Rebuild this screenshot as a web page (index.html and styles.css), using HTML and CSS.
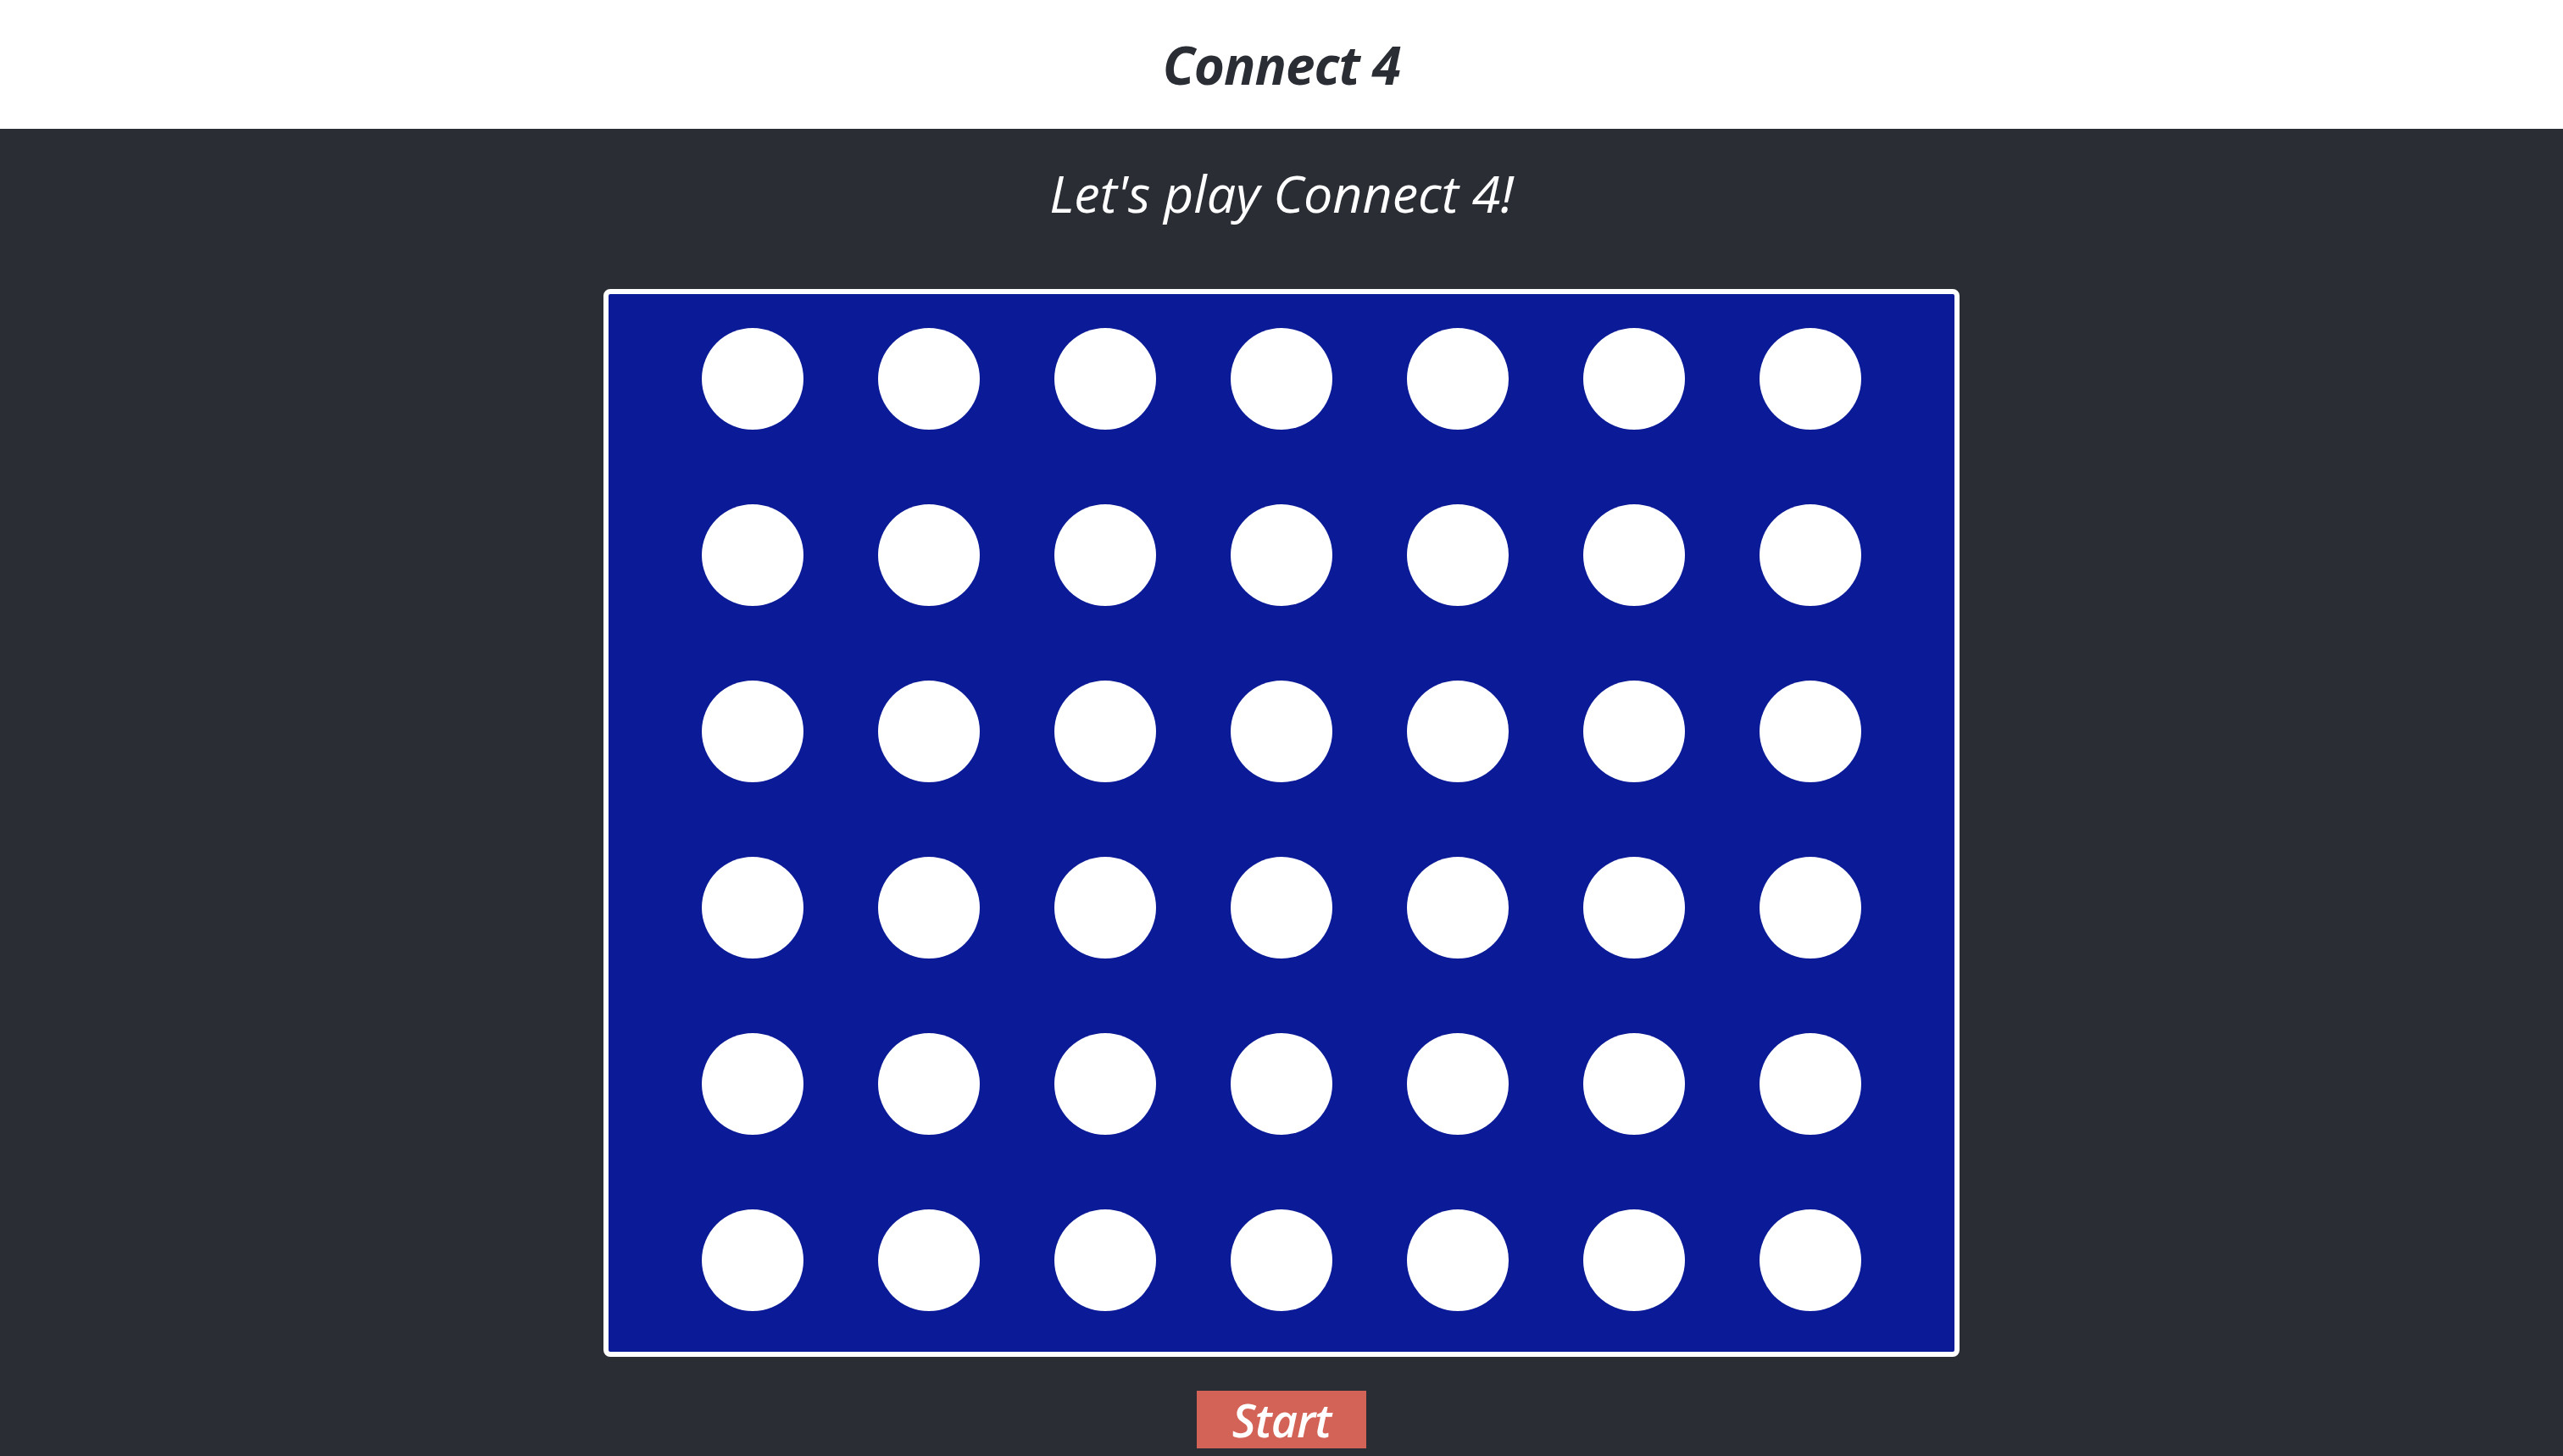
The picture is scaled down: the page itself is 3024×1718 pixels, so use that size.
FILE: index.html
```html
<!DOCTYPE html>
<html lang="en">
<head>
<meta charset="utf-8">
<title>Connect 4</title>
<link rel="stylesheet" href="styles.css">
</head>
<body>
<header class="top">
  <h1 class="title">Connect 4</h1>
</header>
<main class="main">
  <h2 class="subtitle">Let's play Connect 4!</h2>
  <div class="board">
    <div class="grid">
      <span class="slot"></span><span class="slot"></span><span class="slot"></span><span class="slot"></span><span class="slot"></span><span class="slot"></span><span class="slot"></span>
      <span class="slot"></span><span class="slot"></span><span class="slot"></span><span class="slot"></span><span class="slot"></span><span class="slot"></span><span class="slot"></span>
      <span class="slot"></span><span class="slot"></span><span class="slot"></span><span class="slot"></span><span class="slot"></span><span class="slot"></span><span class="slot"></span>
      <span class="slot"></span><span class="slot"></span><span class="slot"></span><span class="slot"></span><span class="slot"></span><span class="slot"></span><span class="slot"></span>
      <span class="slot"></span><span class="slot"></span><span class="slot"></span><span class="slot"></span><span class="slot"></span><span class="slot"></span><span class="slot"></span>
      <span class="slot"></span><span class="slot"></span><span class="slot"></span><span class="slot"></span><span class="slot"></span><span class="slot"></span><span class="slot"></span>
    </div>
  </div>
  <button class="start">Start</button>
</main>
</body>
</html>
```
FILE: styles.css
```css
html, body {
  margin: 0;
  padding: 0;
  height: 100%;
}
body {
  background: #2a2d34;
  font-family: "Open Sans", "Noto Sans", sans-serif;
  font-style: italic;
  overflow: hidden;
}
.top {
  height: 152px;
  background: #ffffff;
  display: flex;
  align-items: center;
  justify-content: center;
}
.title {
  margin: 0;
  font-size: 62px;
  font-weight: 700;
  color: #2a2d34;
  line-height: 1;
  letter-spacing: -1px;
}
.main {
  display: flex;
  flex-direction: column;
  align-items: center;
}
.subtitle {
  margin: 36px 0 0;
  font-size: 61px;
  font-weight: 500;
  line-height: 80px;
  color: #ffffff;
  letter-spacing: 0;
}
.board {
  margin-top: 73px;
  width: 1588px;
  height: 1248px;
  box-sizing: content-box;
  border: 6px solid #ffffff;
  border-radius: 8px;
  background: #0b1a96;
  display: flex;
  justify-content: center;
  padding: 0;
}
.grid {
  padding-top: 40px;
  display: grid;
  grid-template-columns: repeat(7, 120px);
  grid-auto-rows: 120px;
  gap: 88px;
  align-content: start;
}
.slot {
  display: block;
  width: 120px;
  height: 120px;
  border-radius: 50%;
  background: #ffffff;
}
.start {
  margin-top: 40px;
  width: 200px;
  height: 68px;
  border: none;
  background: #d26356;
  color: #ffffff;
  font-family: "Open Sans", "Noto Sans", sans-serif;
  font-style: italic;
  font-weight: 600;
  font-size: 54px;
  line-height: 68px;
  padding: 0;
  letter-spacing: -1px;
}
```
